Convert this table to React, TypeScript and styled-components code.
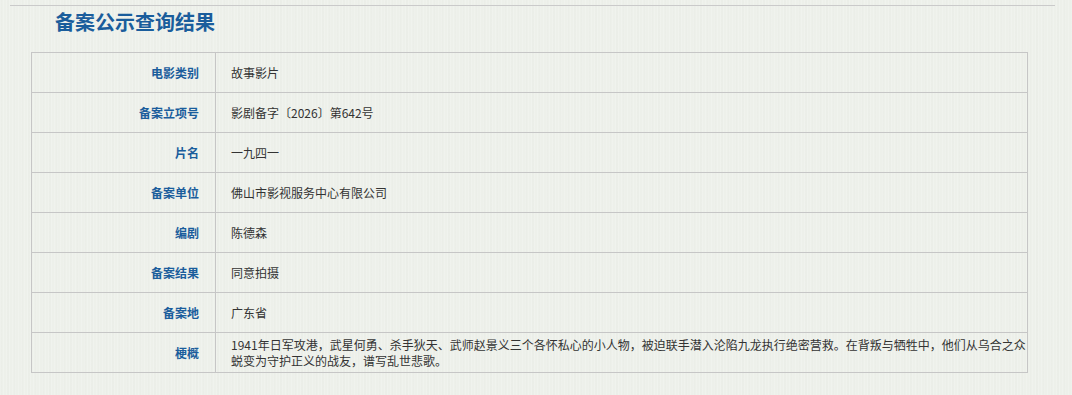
import React from "react";
import styled, { createGlobalStyle } from "styled-components";

const Global = createGlobalStyle`
  html, body {
    margin: 0;
    padding: 0;
    background-color: #edf0ea;
    background-image:
      repeating-linear-gradient(90deg, rgba(255,255,255,0.18) 0px, rgba(255,255,255,0.18) 1px, transparent 1px, transparent 3px),
      repeating-linear-gradient(90deg, rgba(0,0,0,0.008) 0px, rgba(0,0,0,0.008) 2px, transparent 2px, transparent 7px);
    font-family: "Microsoft YaHei", "Noto Sans CJK SC", sans-serif;
    font-size: 12px;
    color: #333;
  }
  #root { width: 1072px; height: 395px; overflow: hidden; }
`;

const Page = styled.div`
  padding: 5px 0 0 10px;
  width: 1045px;
`;

const Header = styled.div`
  border-top: 1px solid #cacaca;
  padding: 2px 0 0 45px;
  height: 47px;
  box-sizing: border-box;
`;

const Title = styled.h2`
  margin: 0;
  font-size: 20px;
  line-height: 28px;
  font-weight: bold;
  color: #1a5d9c;
`;

const TableWrap = styled.div`
  margin-left: 21px;
  width: 997px;
`;

const Table = styled.table`
  width: 100%;
  border-collapse: collapse;
  table-layout: fixed;
`;

const Row = styled.tr`
  height: 40px;
`;

const Label = styled.th`
  width: 184px;
  box-sizing: border-box;
  border: 1px solid #c6c6c6;
  text-align: right;
  padding: 0 16px 0 0;
  font-weight: bold;
  color: #1a5d9c;
  font-size: 12px;
  line-height: 16px;
`;

const Value = styled.td`
  border: 1px solid #c6c6c6;
  padding: 0 0 0 15px;
  color: #333;
  font-size: 12px;
  line-height: 16px;
`;

const rows: [string, string][] = [
  ["电影类别", "故事影片"],
  ["备案立项号", "影剧备字〔2026〕第642号"],
  ["片名", "一九四一"],
  ["备案单位", "佛山市影视服务中心有限公司"],
  ["编剧", "陈德森"],
  ["备案结果", "同意拍摄"],
  ["备案地", "广东省"],
  [
    "梗概",
    "1941年日军攻港，武星何勇、杀手狄天、武师赵景义三个各怀私心的小人物，被迫联手潜入沦陷九龙执行绝密营救。在背叛与牺牲中，他们从乌合之众蜕变为守护正义的战友，谱写乱世悲歌。",
  ],
];

export default function App() {
  return (
    <>
      <Global />
      <Page>
        <Header>
          <Title>备案公示查询结果</Title>
        </Header>
        <TableWrap>
          <Table>
            <tbody>
              {rows.map(([k, v]) => (
                <Row key={k}>
                  <Label>{k}</Label>
                  <Value>{v}</Value>
                </Row>
              ))}
            </tbody>
          </Table>
        </TableWrap>
      </Page>
    </>
  );
}
